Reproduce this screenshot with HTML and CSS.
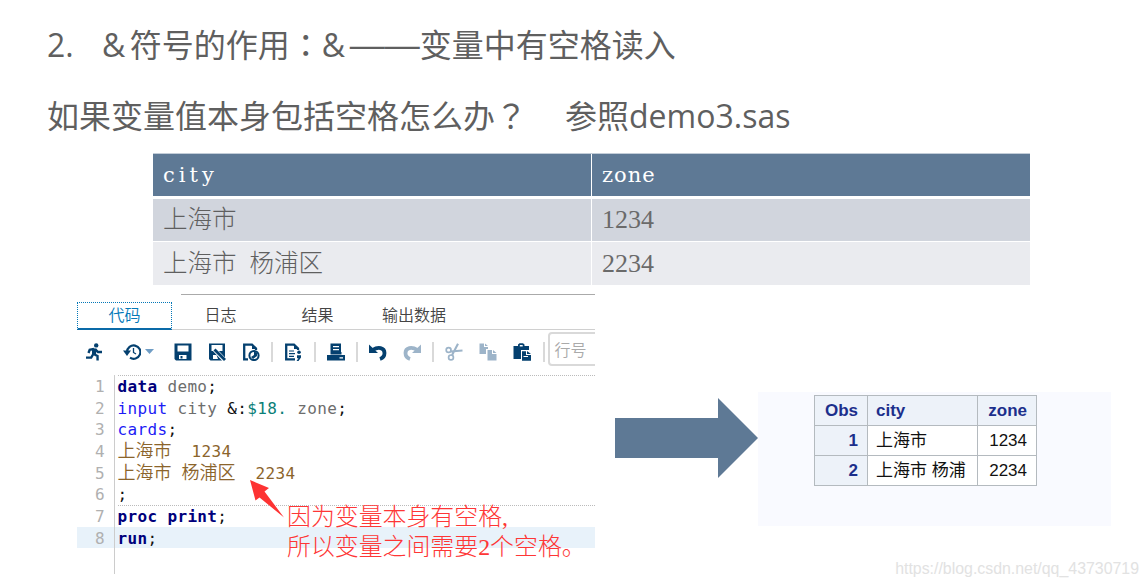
FILE: index.html
```html
<!DOCTYPE html>
<html lang="zh-CN">
<head>
    <meta charset="utf-8">
    <title>&amp;符号的作用</title>
    <link rel="stylesheet" href="styles.css">
</head>
<body>
    <h1><span class="num">2.</span><span class="amp">&amp;</span>符号的作用<span class="wide" lang="zh-TW">：</span><span class="amp">&amp;</span><span class="dash">——</span>变量中有空格读入</h1>
    <h2><span>如果变量值本身包括空格怎么办<span class="wide" lang="zh-TW">？</span></span><span>参照demo3.sas</span></h2>

    <!-- Input data table -->
    <table class="data">
        <tr><th class="city">city</th><th class="zone">zone</th></tr>
        <tr><td>上海市</td><td>1234</td></tr>
        <tr><td>上海市 杨浦区</td><td>2234</td></tr>
    </table>

    <div class="demo">
        <div class="editor">
            <div class="tabs">
                <div class="tab active">代码</div>
                <div class="tab">日志</div>
                <div class="tab">结果</div>
                <div class="tab out">输出数据</div>
            </div>

            <div class="toolbar">
                <!-- run -->
                <svg viewBox="0 0 18 18"><circle cx="11.2" cy="2.4" r="2.2" fill="currentColor"/><path d="M10 6L8.5 11L12.5 13L12.6 17.5M8.3 11L6.2 14.6H1M9 5.8L4.7 6.8L3.5 10M10.5 6.5L13 9H17" fill="none" stroke="currentColor" stroke-width="2.4"/><path d="M7 5.2L11.5 5.5L11 11.5H7Z" fill="currentColor"/></svg>
                <!-- history -->
                <svg viewBox="0 0 18 18"><path d="M4 9A6.7 6.7 0 1 1 7 14.7" fill="none" stroke="currentColor" stroke-width="2.2"/><path d="M0 7.5H8L4 13Z" fill="currentColor"/><path d="M10.5 5V9.5L13 11" fill="none" stroke="currentColor" stroke-width="1.3"/></svg>
                <svg class="caret" viewBox="0 0 9 5"><path d="M0 0H9L4.5 5Z" fill="#6f9dc5"/></svg>
                <!-- save -->
                <svg viewBox="0 0 18 18"><path d="M0.5 0.5H17.5V17.5H2L0.5 16ZM3.5 2.5V8.5H14.5V2.5ZM5 12V16H12.5V12Z" fill="currentColor" fill-rule="evenodd"/><path d="M6.5 13H8.5V15.5H6.5Z" fill="currentColor"/></svg>
                <!-- save as -->
                <svg viewBox="0 0 18 18"><path d="M1 0.5H17V15L15 17.5H2.5L1 16ZM3.5 2V8H14.5V2ZM5 12V16H10L8.5 12Z" fill="currentColor" fill-rule="evenodd"/><path d="M6.5 6.5L16.5 17" stroke="#fff" stroke-width="4.4"/><path d="M6.5 6.5L17 17" stroke="currentColor" stroke-width="2.8"/></svg>
                <!-- page properties -->
                <svg viewBox="0 0 18 18"><path d="M6 16.3H2.2V1.7H10L14 5.5V7" fill="none" stroke="currentColor" stroke-width="2.3"/><path d="M10 1V6H15Z" fill="currentColor"/><circle cx="12" cy="12.5" r="4.6" fill="none" stroke="currentColor" stroke-width="2"/><path d="M12 8V12L9 14L11 16L15 13V10Z" fill="currentColor"/></svg>
                <i class="sep"></i>
                <!-- program summary -->
                <svg viewBox="0 0 18 18"><path d="M11 16.3H2.2V1.7H10L14 5.5V7" fill="none" stroke="currentColor" stroke-width="2.3"/><path d="M10 1V6H15Z" fill="currentColor"/><path d="M5 8H10M5 10.7H11M5 13.3H10" stroke="currentColor" stroke-width="1.2"/><circle cx="15" cy="9.2" r="1.8" fill="currentColor"/><path d="M13 12.3H17V14.5L14.5 18H12.5L14.5 15.3H13Z" fill="currentColor"/></svg>
                <i class="sep"></i>
                <!-- print -->
                <svg viewBox="0 0 18 18"><path d="M3.5 0.5H14V9H14.5V11.5H3.5ZM6 3V4.2H12V3ZM6 6V7.2H12V6ZM0 12H18V17.5H0ZM12.5 14.2V15.5H16V14.2Z" fill="currentColor" fill-rule="evenodd"/></svg>
                <i class="sep"></i>
                <!-- undo / redo -->
                <svg viewBox="0 0 18 18"><path d="M4 6.8C9 3.4 15.5 4.5 15.5 10C15.5 13 14 15 11 16" fill="none" stroke="currentColor" stroke-width="3.8"/><path d="M0 1.5L9 10H0Z" fill="currentColor"/></svg>
                <svg class="off" viewBox="0 0 18 18"><path d="M14 6.8C9 3.4 2.5 4.5 2.5 10C2.5 13 4 15 7 16" fill="none" stroke="currentColor" stroke-width="3.8"/><path d="M18 1.5L9 10H18Z" fill="currentColor"/></svg>
                <i class="sep"></i>
                <!-- cut / copy / paste -->
                <svg class="off" viewBox="0 0 18 18"><g fill="none" stroke="currentColor"><circle cx="3.6" cy="7" r="2.4" stroke-width="1.7"/><circle cx="6" cy="14.4" r="2.4" stroke-width="1.7"/><path d="M5.5 8.5L17.5 7.5M7 12.3L13 0.8" stroke-width="2.1"/></g></svg>
                <svg class="off" viewBox="0 0 18 18"><path d="M0.5 0.5H5V4H9V6H7V11H0.5ZM6 0.5L9 3H6ZM8.5 7H13V11H17.5V17.5H8.5ZM14 7L17.5 10H14Z" fill="currentColor"/></svg>
                <svg viewBox="0 0 18 18"><path d="M0.5 3H5V1.5L6.5 0.3H10L11.5 1.5V3H16V7H8V16H0.5ZM6.8 2V3.5H9.7V2ZM9 8.2H13V12H18V17.8H9ZM14 8L18 11H14ZM10.5 13V14H15V13Z" fill="currentColor" fill-rule="evenodd"/></svg>
                <i class="sep"></i>
                <div class="goto">行号</div>
            </div>

            <div class="code">
                <div class="line top"><b class="n">1</b><pre><b>data</b> demo<s>;</s></pre></div>
                <div class="line"><b class="n">2</b><pre><i>input</i> city <s>&amp;:</s><em>$18.</em> zone<s>;</s></pre></div>
                <div class="line"><b class="n">3</b><pre><i>cards</i><s>;</s></pre></div>
                <div class="line lit"><b class="n">4</b><pre><q>上海市</q>  1234</pre></div>
                <div class="line lit"><b class="n">5</b><pre><q>上海市</q> <q>杨浦区</q>  2234</pre></div>
                <div class="line"><b class="n">6</b><pre><s>;</s></pre></div>
                <div class="line top"><b class="n">7</b><pre><b>proc print</b><s>;</s></pre></div>
                <div class="line current"><b class="n">8</b><pre><b>run</b><s>;</s></pre></div>
                <div class="line rest"><b class="n"></b><pre></pre></div>
            </div>

            <!-- Annotation over the code -->
            <svg class="pointer" viewBox="0 0 34 38"><path d="M0 0L19 8L14.5 11.5L34 37.5L9.5 17.5L5.5 20.5Z" fill="#fd3333"/></svg>
            <div class="note">因为变量本身有空格<span>,</span><br>所以变量之间需要<span>2</span>个空格。</div>
        </div>

        <svg class="arrow" viewBox="0 0 143 80"><path d="M0 20H103V0L143 40L103 80V60H0Z" fill="#5e7995"/></svg>

        <div class="result">
            <table>
                <tr><th class="obs">Obs</th><th class="name">city</th><th>zone</th></tr>
                <tr><th class="obs">1</th><td class="name">上海市</td><td>1234</td></tr>
                <tr><th class="obs">2</th><td class="name">上海市 杨浦</td><td>2234</td></tr>
            </table>
        </div>
    </div>

    <div class="watermark">https://blog.csdn.net/qq_43730719</div>
</body>
</html>
```

FILE: styles.css
```css
* {
    box-sizing: border-box;
}

body {
    margin: 0;
    width: 1148px;
    height: 587px;
    position: relative;
    overflow: hidden;
    background: #fff;
    color: #5f5f5f;
    font-family: "Open Sans", "Noto Sans CJK SC", sans-serif;
}

h1, h2 {
    margin: 0;
    padding-left: 47px;
    font-size: 32px;
    font-weight: 400;
    line-height: 70px;
    height: 70px;
    white-space: nowrap;
}

h1 {
    padding-top: 10px;
    height: 81px;
}

h2 {
    display: flex;
    gap: 38px;
    height: 72px;
}

.num {
    display: inline-block;
    width: 55px;
}

.amp {
    letter-spacing: 4.5px;
}

.wide {
    font-family: "Noto Sans CJK TC", sans-serif;
    line-height: 1;
}

.dash {
    font-family: "Liberation Sans", sans-serif;
    font-size: 35px;
    font-weight: 400;
    line-height: 1;
}

/* Input table */
.data {
    margin-left: 153px;
    width: 877px;
    table-layout: fixed;
    border-collapse: collapse;
    font-family: "Liberation Serif", "Noto Sans CJK SC", serif;
    font-size: 24.5px;
    font-weight: 300;
}

.data th, .data td {
    height: 44px;
    padding: 0 0 0 10px;
    line-height: 38px;
    text-align: left;
    word-spacing: 7px;
    background: #d1d5dd;
    border-bottom: 1px solid #fff;
}

.data th {
    background: #5e7995;
    color: #fff;
    font-family: "DejaVu Serif", serif;
    font-size: 21px;
    font-weight: 400;
    border-top: 1px solid #c3cdd8;
    border-bottom: 3px solid #fff;
}

.data tr:last-child td {
    background: #eaebef;
}

.data th + th, .data td + td {
    border-left: 1px solid #fff;
}

.data td + td {
    font-size: 26px;
    color: #6a6a6a;
}

.data .city {
    letter-spacing: 4px;
}

.data .zone {
    letter-spacing: 1px;
}

.demo {
    display: flex;
    align-items: flex-start;
    padding-left: 77px;
    margin-top: 8px;
}

/* Code editor */
.editor {
    position: relative;
    width: 518px;
    height: 280px;
    overflow: hidden;
}

.tabs {
    display: flex;
    align-items: flex-end;
    height: 36px;
    border-bottom: 1px solid #d0d0d0;
    background: linear-gradient(#aaa, #aaa) 104px 0 / 414px 1px no-repeat;
}

.tab {
    width: 97px;
    height: 28px;
    font-size: 16px;
    font-weight: 350;
    line-height: 28px;
    text-align: center;
    color: #444;
}

.tab.active {
    width: 95px;
    line-height: 25px;
    color: #0378b8;
    border: 1px dotted #0378b8;
    border-bottom: 2px solid #0a6aa8;
    margin-bottom: -1px;
}

.tab.out {
    width: 96px;
}

.toolbar {
    display: flex;
    align-items: center;
    gap: 16px;
    height: 45px;
    padding: 0 0 2px 8px;
    color: #04406f;
}

.toolbar svg {
    flex: none;
    width: 18px;
    height: 18px;
}

.toolbar svg:nth-of-type(2) {
    margin-left: 4px;
}

.toolbar .caret {
    width: 9px;
    height: 5px;
    margin: 0 4px 0 -12px;
}

.toolbar .off {
    color: #9db4c9;
}

.sep {
    flex: none;
    width: 2px;
    height: 20px;
    margin: 0 -5px 0 -4.7px;
    background: #d9d9d9;
}

.goto {
    flex: none;
    width: 60px;
    height: 34px;
    margin: -5px 0 0 -8px;
    padding-left: 5px;
    border: 2px solid #d9d9d9;
    border-radius: 4px;
    color: #aaa;
    font-size: 16px;
    font-weight: 350;
    line-height: 32px;
}

.code {
    font-family: "DejaVu Sans Mono", monospace;
    font-size: 16px;
    letter-spacing: 0.35px;
    color: #6d6d6d;
}

.line {
    display: flex;
    height: 21.67px;
    line-height: 23px;
}

.n {
    width: 38px;
    padding-right: 9px;
    border-right: 1px solid #ccc;
    text-align: right;
    font-weight: 400;
    color: #b0b0b0;
}

pre {
    flex: 1;
    margin: 0 0 0 2.5px;
    font: inherit;
}

.top pre {
    background: repeating-linear-gradient(90deg, #bbb 0 1px, #fff 1px 2px) 0 0 / 100% 1px no-repeat;
}

pre b {
    color: #00007c;
}

pre i {
    font-style: normal;
    color: #1c1cf5;
}

pre em {
    font-style: normal;
    color: #0b8078;
}

pre s {
    text-decoration: none;
    color: #111;
}

pre q {
    display: inline-block;
    quotes: none;
    font-family: "Noto Sans CJK SC", sans-serif;
    font-size: 18px;
    font-weight: 350;
    letter-spacing: 0;
    line-height: 18px;
}

.lit {
    color: #8b642b;
}

.current {
    background: #e8f2fa;
}

.rest {
    height: 26px;
}

.pointer {
    position: absolute;
    left: 173px;
    top: 186px;
    width: 34px;
    height: 38px;
}

.note {
    position: absolute;
    left: 210px;
    top: 206px;
    font-family: "Noto Sans CJK SC", sans-serif;
    font-size: 23.9px;
    font-weight: 300;
    line-height: 29px;
    white-space: nowrap;
    color: #fe3636;
}

.note span {
    font-family: "Liberation Serif", serif;
    line-height: 1;
}

.arrow {
    width: 143px;
    height: 80px;
    margin: 104px 0 0 20px;
}

/* Output table */
.result {
    width: 353px;
    height: 134px;
    margin-top: 98px;
    padding: 3px 0 0 56px;
    background: #f9faff;
}

.result table {
    width: 223px;
    table-layout: fixed;
    border-collapse: collapse;
    font-family: "Liberation Sans", "Noto Sans CJK SC", sans-serif;
    font-size: 17px;
    color: #111;
}

.result th, .result td {
    height: 30px;
    padding: 0 9px 0 0;
    border: 1px solid #b4babf;
    line-height: 26px;
    text-align: right;
    background: #fff;
    white-space: nowrap;
}

.result th {
    background: #edf2f9;
    color: #1c2f8c;
}

.result .obs {
    width: 53px;
}

.result .name {
    width: 110px;
    padding: 0 0 0 8px;
    text-align: left;
}

.watermark {
    position: absolute;
    right: 9px;
    bottom: 8px;
    font-family: "Liberation Sans", sans-serif;
    font-size: 15.9px;
    line-height: 20px;
    color: #e2e2e2;
}
```
